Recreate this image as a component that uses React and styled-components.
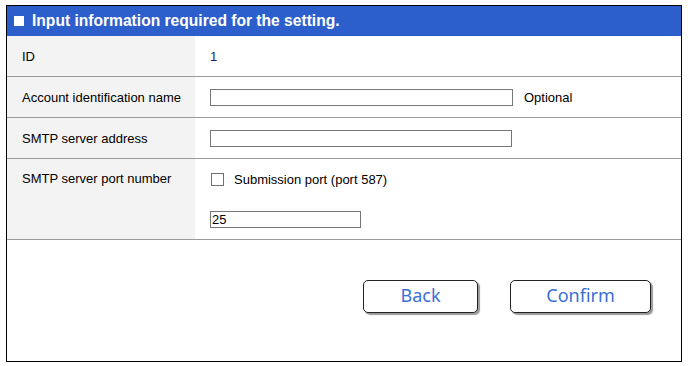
import styled, { createGlobalStyle } from "styled-components";

const GlobalStyle = createGlobalStyle`
  body {
    margin: 0;
    background: #ffffff;
    font-family: "Liberation Sans", Arial, sans-serif;
  }
`;

const rows = [
  { label: "ID", kind: "text", value: "1" },
  { label: "Account identification name", kind: "input", width: 303, note: "Optional" },
  { label: "SMTP server address", kind: "input", width: 302 },
  { label: "SMTP server port number", kind: "port" },
];

const App = () => {
  return (
    <>
      <GlobalStyle />
      <Panel>
        <Header>
          <HeaderMark />
          <HeaderTitle>Input information required for the setting.</HeaderTitle>
        </Header>
        {rows.map((row) => (
          <Row key={row.label} $tall={row.kind === "port"}>
            <Label $top={row.kind === "port"}>{row.label}</Label>
            <Value $stack={row.kind === "port"}>
              {row.kind === "text" && <ValueText>{row.value}</ValueText>}
              {row.kind === "input" && (
                <>
                  <TextBox $width={row.width} type="text" />
                  {row.note && <Note>{row.note}</Note>}
                </>
              )}
              {row.kind === "port" && (
                <>
                  <CheckLine>
                    <CheckBox type="checkbox" />
                    <CheckText>Submission port (port 587)</CheckText>
                  </CheckLine>
                  <TextBox $width={151} type="text" defaultValue="25" />
                </>
              )}
            </Value>
          </Row>
        ))}
        <Actions>
          <Button>Back</Button>
          <Button $wide>Confirm</Button>
        </Actions>
      </Panel>
    </>
  );
};

export default App;

/* styled components */

const Panel = styled.div`
  margin: 5px 0 0 6px;
  width: 674px;
  height: 355px;
  border: 1px solid #000;
  display: flex;
  flex-direction: column;
`;

const Header = styled.div`
  height: 30px;
  background: #2c5fcb;
  display: flex;
  align-items: center;
  padding-left: 7px;
  gap: 8px;
`;

const HeaderMark = styled.span`
  width: 10px;
  height: 10px;
  background: #fff;
`;

const HeaderTitle = styled.span`
  color: #fff;
  font-weight: bold;
  font-size: 15.6px;
`;

const Row = styled.div`
  display: flex;
  height: ${({ $tall }) => ($tall ? "80px" : "40px")};
  border-bottom: 1px solid #9a9a9a;
`;

const Label = styled.div`
  width: 173px;
  padding-left: 15px;
  background: #f3f3f3;
  font-size: 13px;
  color: #000;
  display: flex;
  align-items: ${({ $top }) => ($top ? "flex-start" : "center")};
  padding-top: ${({ $top }) => ($top ? "12px" : "0")};
`;

const Value = styled.div`
  flex: 1;
  padding-left: 15px;
  display: flex;
  flex-direction: ${({ $stack }) => ($stack ? "column" : "row")};
  align-items: ${({ $stack }) => ($stack ? "flex-start" : "center")};
  padding-top: ${({ $stack }) => ($stack ? "13px" : "0")};
  gap: ${({ $stack }) => ($stack ? "25px" : "0")};
`;

const ValueText = styled.span`
  font-size: 13px;
  color: #1c1c6e;
`;

const TextBox = styled.input`
  box-sizing: border-box;
  width: ${({ $width }) => $width}px;
  height: 17px;
  margin: 0;
  padding: 0 1px;
  border: 1px solid #767676;
  border-radius: 0;
  font-family: "Liberation Sans", Arial, sans-serif;
  font-size: 13px;
  color: #000;
  outline: none;
`;

const Note = styled.span`
  margin-left: 11px;
  font-size: 13px;
  color: #000;
`;

const CheckLine = styled.label`
  display: flex;
  align-items: center;
  height: 14px;
`;

const CheckBox = styled.input`
  appearance: none;
  box-sizing: border-box;
  width: 13px;
  height: 13px;
  margin: 0 0 0 1px;
  border: 1px solid #6f6f6f;
  background: #fff;
`;

const CheckText = styled.span`
  margin-left: 10px;
  font-size: 13px;
  color: #000;
`;

const Actions = styled.div`
  display: flex;
  justify-content: flex-end;
  gap: 32px;
  padding: 40px 30px 0 0;
`;

const Button = styled.button`
  box-sizing: border-box;
  width: ${({ $wide }) => ($wide ? "141px" : "115px")};
  height: 33px;
  background: #fff;
  border: 1px solid #222;
  border-radius: 5px;
  box-shadow: 2px 2px 1px #9a9a9a;
  color: #3b6fd6;
  font-family: "Noto Sans", "DejaVu Sans", sans-serif;
  font-size: 18px;
  padding: 0 0 3px;
  cursor: pointer;
`;
